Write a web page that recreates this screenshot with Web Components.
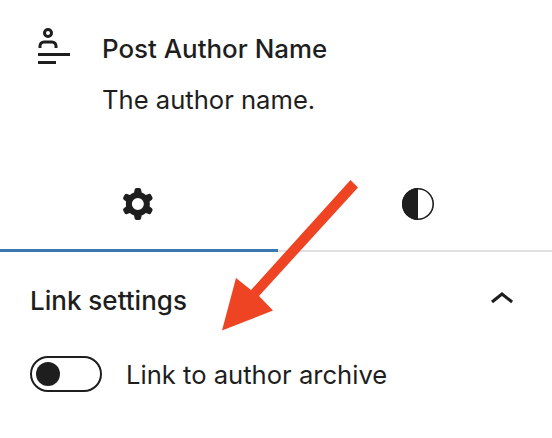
<!DOCTYPE html>
<html>
<head>
<meta charset="utf-8">
<style>
html, body { margin: 0; background: #fff; }
body {
  width: 552px;
  height: 438px;
  overflow: hidden;
  position: relative;
  font-family: Inter, "Liberation Sans", sans-serif;
  color: #1e1e1e;
}
</style>
</head>
<body>
<block-card title="Post Author Name">
  <svg slot="icon" width="48" height="48" viewBox="0 0 24 24" fill="#1e1e1e"><path fill-rule="evenodd" d="M10 4.5a1 1 0 11-2 0 1 1 0 012 0zm1.5 0a2.5 2.5 0 11-5 0 2.5 2.5 0 015 0zm2.25 7.5v-1A2.75 2.75 0 0011 8.25H7A2.75 2.75 0 004.25 11v1h1.5v-1c0-.69.56-1.25 1.25-1.25h4c.69 0 1.25.56 1.25 1.25v1h1.5zM4 20h9v-1.5H4V20zm16-4H4v-1.5h16V16z"/></svg>
  The author name.
</block-card>
<tab-bar>
  <tab-item active>
    <svg width="48" height="48" viewBox="0 0 24 24" fill="#1e1e1e"><path fill-rule="evenodd" clip-rule="evenodd" d="M10.289 4.836A1 1 0 0 1 11.275 4h1.306a1 1 0 0 1 .987.836l.244 1.466c.787.26 1.503.679 2.108 1.218l1.393-.522a1 1 0 0 1 1.216.437l.653 1.13a1 1 0 0 1-.23 1.273l-1.148.944a6.025 6.025 0 0 1 0 2.435l1.149.946a1 1 0 0 1 .23 1.272l-.653 1.13a1 1 0 0 1-1.216.437l-1.394-.522c-.605.54-1.32.958-2.108 1.218l-.244 1.466a1 1 0 0 1-.987.836h-1.306a1 1 0 0 1-.986-.836l-.244-1.466a5.995 5.995 0 0 1-2.108-1.218l-1.394.522a1 1 0 0 1-1.217-.436l-.653-1.131a1 1 0 0 1 .23-1.272l1.149-.946a6.026 6.026 0 0 1 0-2.435l-1.148-.944a1 1 0 0 1-.23-1.272l.653-1.131a1 1 0 0 1 1.217-.437l1.393.522a5.994 5.994 0 0 1 2.108-1.218l.244-1.466ZM14.929 12a3 3 0 1 1-6 0 3 3 0 0 1 6 0Z"/></svg>
  </tab-item>
  <tab-item>
    <svg width="48" height="48" viewBox="0 0 24 24" fill="#1e1e1e"><circle cx="12" cy="12" r="7.6" fill="none" stroke="#1e1e1e" stroke-width=".8"/><path d="M12 4a8 8 0 0 0 0 16z"/></svg>
  </tab-item>
</tab-bar>
<panel-section title="Link settings">
  <toggle-row>Link to author archive</toggle-row>
</panel-section>
<annot-arrow></annot-arrow>

<script>
class BlockCard extends HTMLElement {
  connectedCallback() {
    this.attachShadow({ mode: "open" });
    this.shadowRoot.innerHTML = `
<style>
:host { display: flex; gap: 24px; padding: 24px 30px 0; height: 156px; box-sizing: border-box; }
.icon { width: 48px; height: 48px; flex: none; }
.title { font-size: 25.9px; font-weight: 500; line-height: 50px; }
.desc { font-size: 25.6px; line-height: 50px; margin-top: 1px; }
</style>
<div class="icon"><slot name="icon"></slot></div>
<div>
  <div class="title" id="title"></div>
  <div class="desc"><slot></slot></div>
</div>`;
    this.shadowRoot.getElementById("title").textContent = this.getAttribute("title");
  }
}

class TabBar extends HTMLElement {
  connectedCallback() {
    this.attachShadow({ mode: "open" });
    this.shadowRoot.innerHTML = `
<style>
:host { display: grid; grid-template-columns: 278px 280px; height: 96px; box-sizing: border-box; border-bottom: 2px solid #e0e0e0; }
</style>
<slot></slot>`;
  }
}

class TabItem extends HTMLElement {
  connectedCallback() {
    this.attachShadow({ mode: "open" });
    this.shadowRoot.innerHTML = `
<style>
:host { display: flex; justify-content: center; padding-top: 24px; box-sizing: border-box; height: 96px; }
:host([active]) { box-shadow: inset 0 -3px 0 #3a78b0; padding-right: 2px; }
</style>
<slot></slot>`;
  }
}

class PanelSection extends HTMLElement {
  connectedCallback() {
    this.attachShadow({ mode: "open" });
    this.shadowRoot.innerHTML = `
<style>
:host { display: block; padding: 0 30px; }
.head { display: flex; justify-content: space-between; align-items: center; height: 96px; font-size: 26px; font-weight: 500; }
.head svg { margin-right: -4px; }
</style>
<div class="head">
  <span id="title"></span>
  <svg width="48" height="48" viewBox="0 0 24 24" fill="#1e1e1e"><path d="M6.5 12.4L12 8l5.5 4.4-.9 1.2L12 10l-4.5 3.6-1-1.2z"/></svg>
</div>
<slot></slot>`;
    this.shadowRoot.getElementById("title").textContent = this.getAttribute("title");
  }
}

class ToggleRow extends HTMLElement {
  connectedCallback() {
    this.attachShadow({ mode: "open" });
    this.shadowRoot.innerHTML = `
<style>
:host { display: flex; align-items: center; gap: 24px; font-size: 25.6px; height: 36px; margin-top: 8px; }
.track { width: 72px; height: 36px; box-sizing: border-box; border: 2px solid #1e1e1e; border-radius: 18px; padding: 4px; background: #fff; flex: none; }
.thumb { width: 24px; height: 24px; border-radius: 50%; background: #1e1e1e; }
</style>
<div class="track"><div class="thumb"></div></div>
<span><slot></slot></span>`;
  }
}

class AnnotArrow extends HTMLElement {
  connectedCallback() {
    this.attachShadow({ mode: "open" });
    this.shadowRoot.innerHTML = `
<style>
:host { position: absolute; left: 0; top: 0; width: 552px; height: 438px; pointer-events: none; }
svg { display: block; }
</style>
<svg width="552" height="438" viewBox="0 0 552 438"><path fill="#ee4423" d="M350.5 180 L358 187.5 L259 296 L273 310.5 L222 330.5 L236 278 L251 290 Z"/></svg>`;
  }
}

customElements.define("block-card", BlockCard);
customElements.define("tab-bar", TabBar);
customElements.define("tab-item", TabItem);
customElements.define("panel-section", PanelSection);
customElements.define("toggle-row", ToggleRow);
customElements.define("annot-arrow", AnnotArrow);
</script>
</body>
</html>
